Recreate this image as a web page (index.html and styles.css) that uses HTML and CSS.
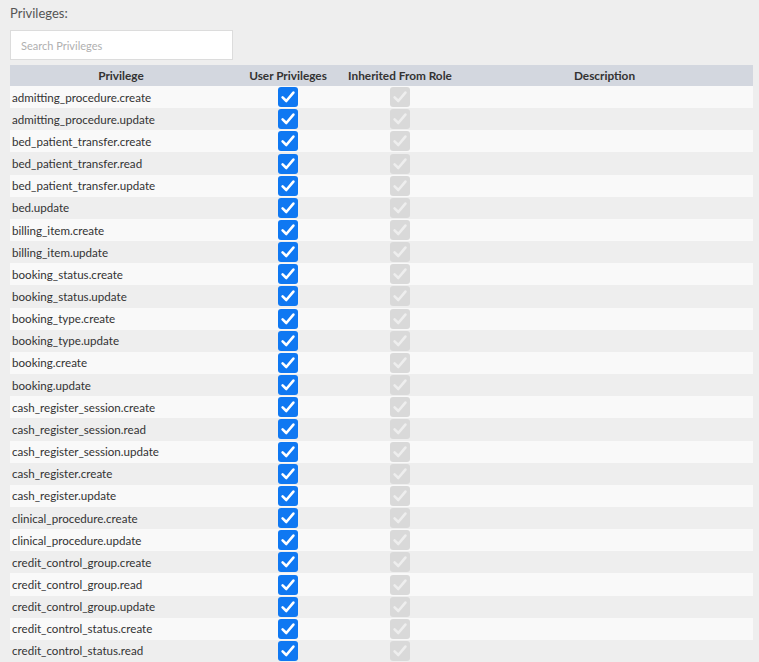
FILE: index.html
```html
<!DOCTYPE html>
<html lang="en">
<head>
<meta charset="utf-8">
<title>Privileges</title>
<link rel="stylesheet" href="styles.css">
</head>
<body>
<div class="page">
  <div class="label">Privileges:</div>
  <input class="search" type="text" placeholder="Search Privileges">
  <table class="grid">
    <colgroup>
      <col class="c-name"><col class="c-user"><col class="c-inh"><col class="c-desc">
    </colgroup>
    <thead>
      <tr><th>Privilege</th><th>User Privileges</th><th>Inherited From Role</th><th>Description</th></tr>
    </thead>
    <tbody id="rows">
    </tbody>
  </table>
</div>
<template id="tpl">
  <tr>
    <td class="name"></td>
    <td class="cb"><span class="box on"><svg viewBox="0 0 20 20"><path d="M4.6 10.4 L8.3 14 L15.4 5.6"/></svg></span></td>
    <td class="cb"><span class="box off"><svg viewBox="0 0 20 20"><path d="M4.6 10.4 L8.3 14 L15.4 5.6"/></svg></span></td>
    <td class="desc"></td>
  </tr>
</template>
<script src="app.js"></script>
</body>
</html>
```
FILE: app.js
```js
var names = [
  "admitting_procedure.create","admitting_procedure.update",
  "bed_patient_transfer.create","bed_patient_transfer.read","bed_patient_transfer.update",
  "bed.update","billing_item.create","billing_item.update",
  "booking_status.create","booking_status.update","booking_type.create","booking_type.update",
  "booking.create","booking.update",
  "cash_register_session.create","cash_register_session.read","cash_register_session.update",
  "cash_register.create","cash_register.update",
  "clinical_procedure.create","clinical_procedure.update",
  "credit_control_group.create","credit_control_group.read","credit_control_group.update",
  "credit_control_status.create","credit_control_status.read"
];
var tbody = document.getElementById("rows");
var tpl = document.getElementById("tpl");
names.forEach(function (n) {
  var row = tpl.content.cloneNode(true);
  row.querySelector(".name").textContent = n;
  tbody.appendChild(row);
});
```
FILE: styles.css
```css
html, body {
  margin: 0;
  padding: 0;
  background: #eeeeee;
  overflow: hidden;
}
.page {
  padding: 5px 6px 0 10px;
  font-family: "Source Sans Pro", Lato, "Liberation Sans", sans-serif;
  color: #333333;
}
.label {
  font-size: 13px;
  line-height: 16px;
  color: #555555;
  height: 16px;
}
.search {
  display: block;
  box-sizing: border-box;
  width: 223px;
  height: 30px;
  margin: 9px 0 5px 0;
  padding: 0 10px;
  border: 1px solid #dcdcdc;
  background: #ffffff;
  font-family: inherit;
  font-size: 11px;
  color: #333;
  outline: none;
}
.search::placeholder {
  color: #b0b0b0;
}
.grid {
  width: 743px;
  border-collapse: collapse;
  table-layout: fixed;
  font-size: 11.6px;
}
.c-name { width: 222px; }
.c-user { width: 112px; }
.c-inh { width: 112px; }
.c-desc { width: 297px; }
.grid th {
  background: #d3d7df;
  height: 21px;
  padding: 0;
  font-weight: 700;
  font-size: 11.8px;
  color: #333333;
  text-align: center;
  vertical-align: middle;
}
.grid td {
  height: 22.17px;
  padding: 0 0 0 2px;
  vertical-align: middle;
  box-sizing: border-box;
}
.grid tbody tr:nth-child(odd) {
  background: #f9f9f9;
}
.grid tbody tr:nth-child(even) {
  background: #eeeeee;
}
.grid td.cb {
  text-align: center;
  padding: 0;
  line-height: 0;
}
.box {
  display: inline-block;
  width: 20px;
  height: 20px;
  border-radius: 3px;
  vertical-align: middle;
}
.box svg {
  width: 20px;
  height: 20px;
  display: block;
}
.box path {
  fill: none;
  stroke-width: 2.6;
  stroke-linecap: round;
  stroke-linejoin: round;
}
.box.on {
  background: #0f78f2;
}
.box.on path {
  stroke: #ffffff;
}
.box.off {
  background: #d9d9d9;
}
.box.off path {
  stroke: #eeeeee;
}
```
